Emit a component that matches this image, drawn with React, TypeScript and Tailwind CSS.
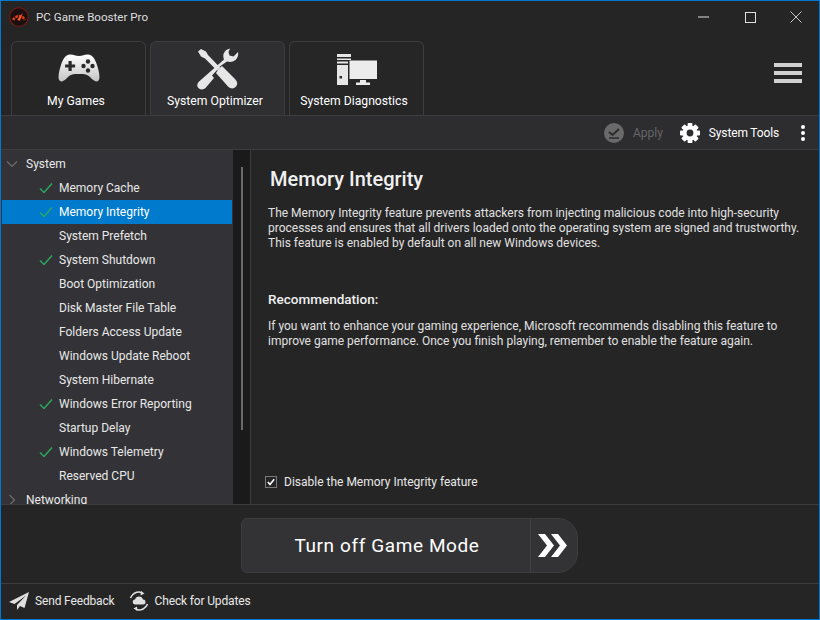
import React from "react";

const items: [string, boolean][] = [
  ["Memory Cache", true],
  ["Memory Integrity", true],
  ["System Prefetch", false],
  ["System Shutdown", true],
  ["Boot Optimization", false],
  ["Disk Master File Table", false],
  ["Folders Access Update", false],
  ["Windows Update Reboot", false],
  ["System Hibernate", false],
  ["Windows Error Reporting", true],
  ["Startup Delay", false],
  ["Windows Telemetry", true],
  ["Reserved CPU", false],
];

function Logo() {
  return (
    <svg width="20" height="20" viewBox="0 0 20 20" className="shrink-0">
      <circle cx="10" cy="10" r="9.3" fill="#1c0f0f" stroke="#6a1c14" strokeWidth="1.2" />
      <path d="M4.2 13 A6.3 6.3 0 0 1 15.8 13" fill="none" stroke="#d8401c" strokeWidth="2.6" strokeDasharray="2.6 0.9" />
      <path d="M8.3 12.8 L14 5.5 L10.8 14 Z" fill="#ff5a24" />
    </svg>
  );
}

function Gamepad() {
  return (
    <svg width="42" height="30" viewBox="0 0 42 30">
      <defs>
        <linearGradient id="pad" x1="0" y1="0" x2="0" y2="1">
          <stop offset="0" stopColor="#ffffff" />
          <stop offset="1" stopColor="#c4c4c4" />
        </linearGradient>
      </defs>
      <path fill="url(#pad)" d="M12 1.5 C15 1 17 3 21 3 C25 3 27 1 30 1.5 C35 2 37 6 39 12 C41 18 42.5 25 40.5 27.5 C38 30 35 27 32 24 C29.5 21.5 27 21 21 21 C15 21 12.5 21.5 10 24 C7 27 4 30 1.5 27.5 C-0.5 25 1 18 3 12 C5 6 7 2 12 1.5 Z" />
      <path fill="#2a2a2c" d="M10.5 8 h3.2 v3.4 h3.4 v3.2 h-3.4 v3.4 h-3.2 v-3.4 h-3.4 v-3.2 h3.4 Z" />
      <circle cx="30" cy="8.5" r="2.2" fill="#2a2a2c" />
      <circle cx="25.5" cy="13" r="2.2" fill="#2a2a2c" />
      <circle cx="34.5" cy="13" r="2.2" fill="#2a2a2c" />
      <circle cx="30" cy="17.5" r="2.2" fill="#2a2a2c" />
    </svg>
  );
}

function Tools() {
  return (
    <svg width="42" height="42" viewBox="0 0 42 42" className="mt-[2px]">
      <path fill="#e6e6e6" d="M1 3.5 L4 1 L9 3.5 L11 7 L23 19.5 L20 22.5 L8 10.5 L4 8.5 Z" />
      <path fill="#e6e6e6" d="M21.5 21 L25 18 L38 31 C40.5 33.5 41 36 39 38.5 C37 41 33.5 41 31 38.5 L19 25 Z" />
      <path fill="#e6e6e6" d="M33 0.5 C30 1 27.5 3 26.5 6 C26 8.5 26.5 10 27 11.5 L1.5 34 C-0.5 36.5 0 39 2 40.5 C4 42 7 41.5 8.5 40 L17 30 L15 27.5 L21 21 L23.5 18 L30 13.5 C33 14.5 36 14 38.5 12 C41 9.5 41.5 7 41 4 L36.5 8.5 L32.5 7.5 L31.5 4 Z" />
    </svg>
  );
}

function Computer() {
  return (
    <svg width="40" height="31" viewBox="0 0 40 31" className="mt-[3px]">
      <path fill="#e6e6e6" d="M0 0 H14 V3 H0 Z M0 4.5 H14 V6 H0 Z M0 7.5 H11 V9.5 H0 Z M0 11 H11 V31 H0 Z" />
      <rect x="2.5" y="22" width="2.5" height="2.5" fill="#2a2a2c" />
      <path fill="#ececec" d="M12.5 6.5 H40 V25 H12.5 Z M23 26 H29 V28.5 H33 V31 H19 V28.5 H23 Z" />
    </svg>
  );
}

function Gear() {
  return (
    <svg width="20" height="20" viewBox="0 0 20 20" className="ml-[17px]">
      <g fill="#ffffff">
        <rect x="7.6" y="0" width="4.8" height="20" rx="0.8" />
        <rect x="7.6" y="0" width="4.8" height="20" rx="0.8" transform="rotate(45 10 10)" />
        <rect x="7.6" y="0" width="4.8" height="20" rx="0.8" transform="rotate(90 10 10)" />
        <rect x="7.6" y="0" width="4.8" height="20" rx="0.8" transform="rotate(135 10 10)" />
        <circle cx="10" cy="10" r="7.4" />
      </g>
      <circle cx="10" cy="10" r="3.4" fill="#2d2d30" />
    </svg>
  );
}

function Tab({ label, active, icon }: { label: string; active?: boolean; icon: React.ReactNode }) {
  return (
    <div
      className={
        "w-[135px] h-[75px] rounded-t-[6px] border border-b-0 border-[#3d3d40] flex flex-col items-center " +
        (active ? "bg-[#2f2f32]" : "bg-[#262627]")
      }
    >
      <div className="h-[51px] flex items-center justify-center">{icon}</div>
      <div className="text-white text-[12.2px] leading-[16px] pr-[5px]">{label}</div>
    </div>
  );
}

function Check() {
  return (
    <svg width="14" height="12" viewBox="0 0 14 12" className="shrink-0">
      <path d="M1 6.5 L5 10.5 L13 1.5" fill="none" stroke="#2bab5f" strokeWidth="1.4" />
    </svg>
  );
}

export default function App() {
  return (
    <div
      className="w-[820px] h-[620px] bg-[#252526] border border-[#0078d4] flex flex-col overflow-hidden text-[#e8e8e8] text-[12px]"
      style={{ fontFamily: 'Roboto, "Noto Sans", sans-serif' }}
    >
      {/* Title bar */}
      <div className="h-[40px] shrink-0 flex items-start pl-[8px] pt-[6px]">
        <Logo />
        <span className="ml-[7px] text-[#dedede] text-[11.6px] leading-[20px]">PC Game Booster Pro</span>
        <div className="ml-auto flex items-center h-[20px] text-[#dddddd]">
          <div className="w-[46px] flex justify-center">
            <svg width="12" height="2" viewBox="0 0 12 2"><path d="M0 1 H11" stroke="#e0e0e0" strokeWidth="1" /></svg>
          </div>
          <div className="w-[46px] flex justify-center">
            <svg width="11" height="11" viewBox="0 0 11 11"><rect x="0.5" y="0.5" width="10" height="10" fill="none" stroke="#e0e0e0" /></svg>
          </div>
          <div className="w-[46px] flex justify-center">
            <svg width="12" height="12" viewBox="0 0 12 12"><path d="M0.5 0.5 L11.5 11.5 M11.5 0.5 L0.5 11.5" stroke="#c8c8c8" /></svg>
          </div>
        </div>
      </div>

      {/* Tabs */}
      <div className="h-[74px] shrink-0 flex pl-[10px] gap-[4px]">
        <Tab label="My Games" icon={<Gamepad />} />
        <Tab label="System Optimizer" active icon={<Tools />} />
        <Tab label="System Diagnostics" icon={<Computer />} />
        <div className="ml-auto mr-[17px] mt-[22px] flex flex-col gap-[4px]">
          <div className="w-[28px] h-[4px] bg-[#d0d0d0]" />
          <div className="w-[28px] h-[4px] bg-[#d0d0d0]" />
          <div className="w-[28px] h-[4px] bg-[#d0d0d0]" />
        </div>
      </div>

      {/* Toolbar */}
      <div className="h-[35px] shrink-0 bg-[#2d2d30] border-t border-b border-[#3d3d40] flex items-center justify-end">
        <svg width="20" height="20" viewBox="0 0 20 20">
          <circle cx="10" cy="10" r="10" fill="#6a6a6a" />
          <path d="M5 9 L8.5 12 L15 6" fill="none" stroke="#2d2d30" strokeWidth="2" />
          <path d="M5 15 H15" stroke="#2d2d30" strokeWidth="1.6" />
        </svg>
        <span className="ml-[9px] text-[#666666]">Apply</span>
        <Gear />
        <span className="ml-[9px] text-white tracking-[-0.15px]">System Tools</span>
        <div className="ml-[22px] mr-[14px] flex flex-col gap-[2px]">
          <div className="w-[4px] h-[4px] rounded-full bg-white" />
          <div className="w-[4px] h-[4px] rounded-full bg-white" />
          <div className="w-[4px] h-[4px] rounded-full bg-white" />
        </div>
      </div>

      {/* Main */}
      <div className="h-[355px] shrink-0 flex border-b border-[#3d3d40]">
        <div className="w-[232px] shrink-0 bg-[#333337] overflow-hidden pt-[2px]">
          <div className="h-[24px] flex items-center pl-[5px]">
            <svg width="12" height="12" viewBox="0 0 12 12"><path d="M1 3.5 L6 8.5 L11 3.5" fill="none" stroke="#6e6e72" strokeWidth="1.2" /></svg>
            <span className="ml-[8px] text-[#e8e8e8]">System</span>
          </div>
          {items.map(([name, checked]) => (
            <div
              key={name}
              className={
                "h-[24px] flex items-center pl-[37px] ml-[1px] mr-[1px] " +
                (name === "Memory Integrity" ? "bg-[#007acc] text-white" : "")
              }
            >
              <div className="w-[20px] shrink-0">{checked && <Check />}</div>
              <span>{name}</span>
            </div>
          ))}
          <div className="h-[24px] flex items-center pl-[5px]">
            <svg width="12" height="12" viewBox="0 0 12 12"><path d="M3.5 1 L8.5 6 L3.5 11" fill="none" stroke="#6e6e72" strokeWidth="1.2" /></svg>
            <span className="ml-[8px] text-[#e8e8e8]">Networking</span>
          </div>
        </div>
        <div className="w-[18px] shrink-0 bg-[#1a1a1a] border-r border-[#3d3d40] pt-[17px] pl-[8px]">
          <div className="w-[2px] h-[263px] bg-[#6a6a6a]" />
        </div>
        <div className="flex-1 flex flex-col pl-[17px] pr-[14px] pt-[15px] pb-[13px] text-[#e0e0e0]">
          <h1 className="text-[20px] leading-[28px] text-[#f0f0f0] ml-[2px] font-medium">Memory Integrity</h1>
          <p className="mt-[13px] leading-[15px]">
            The Memory Integrity feature prevents attackers from injecting malicious code into high-security
            processes and ensures that all drivers loaded onto the operating system are signed and trustworthy.
            This feature is enabled by default on all new Windows devices.
          </p>
          <div className="mt-[39px] text-[13.5px] leading-[18px] font-medium text-[#f0f0f0]">Recommendation:</div>
          <p className="mt-[11px] leading-[15px]">
            If you want to enhance your gaming experience, Microsoft recommends disabling this feature to
            improve game performance. Once you finish playing, remember to enable the feature again.
          </p>
          <div className="mt-auto flex items-center ml-[-3px]">
            <div className="w-[12px] h-[12px] border border-[#7a7a7a] flex items-center justify-center">
              <svg width="8" height="8" viewBox="0 0 8 8"><path d="M0.8 4 L3 6.4 L7.2 1.2" fill="none" stroke="#ffffff" strokeWidth="1.6" /></svg>
            </div>
            <span className="ml-[7px] text-[#e8e8e8]">Disable the Memory Integrity feature</span>
          </div>
        </div>
      </div>

      {/* Game mode */}
      <div className="h-[79px] shrink-0 flex items-center justify-center border-b border-[#3d3d40] pt-[3px]">
        <div className="w-[337px] h-[55px] ml-[-1px] bg-[#333335] border border-[#3d3d40] rounded-l-[6px] rounded-r-[20px] flex">
          <div className="flex-1 flex items-center justify-center text-[19px] tracking-[0.6px] text-white pl-[2px] pt-[1px]">
            Turn off Game Mode
          </div>
          <div className="w-[47px] border-l border-[#424245] flex items-center justify-center pr-[4px]">
            <svg width="29" height="23" viewBox="0 0 29 23">
              <path fill="#ffffff" d="M0 0 H7 L16 11.5 L7 23 H0 L9 11.5 Z M13 0 H20 L29 11.5 L20 23 H13 L22 11.5 Z" />
            </svg>
          </div>
        </div>
      </div>

      {/* Footer */}
      <div className="flex-1 flex items-center pl-[8px] pb-[2px]">
        <svg width="20" height="18" viewBox="0 0 20 18">
          <path fill="#e0e0e0" d="M20 0 L0 10 L5.5 12 L17 3.5 L8 13 V18 L11 14 L15.5 16 Z" />
        </svg>
        <span className="ml-[6px] tracking-[-0.15px]">Send Feedback</span>
        <svg width="20" height="20" viewBox="0 0 20 20" className="ml-[14px]">
          <path d="M1.5 7 A9 9 0 0 1 12.5 1.4 M18.5 13 A9 9 0 0 1 7.5 18.6" fill="none" stroke="#e0e0e0" strokeWidth="1.6" />
          <path d="M12 0 L15.5 2.5 L11.5 4.5 Z M8 15.5 L4.5 17.5 L8.5 20 Z" fill="#e0e0e0" />
          <path fill="#e0e0e0" d="M6.5 13.5 A2.5 2.5 0 0 1 6 8.5 A4.2 4.2 0 0 1 14 8.5 A2.5 2.5 0 0 1 14 13.5 Z" />
        </svg>
        <span className="ml-[6px] tracking-[-0.15px]">Check for Updates</span>
      </div>
    </div>
  );
}
